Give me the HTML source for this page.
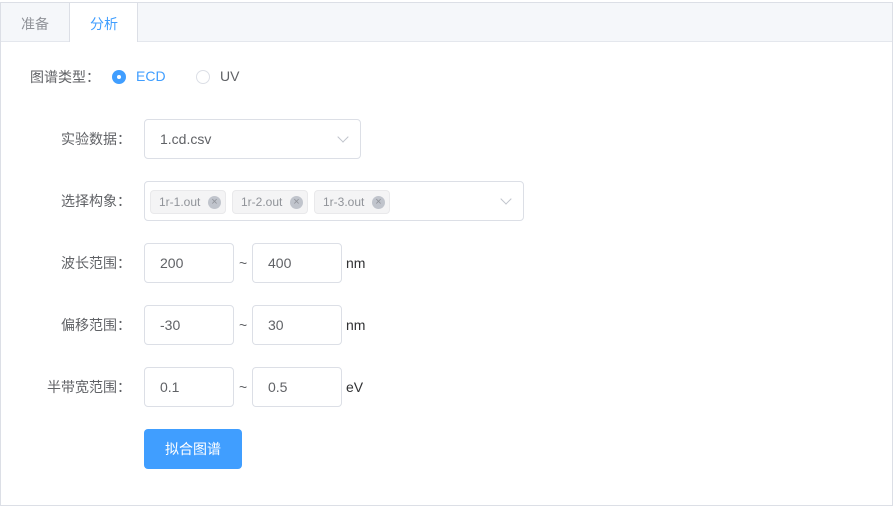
<!DOCTYPE html><html><head><meta charset="utf-8"><style>
body{margin:0;width:895px;height:507px;background:#fff;font-family:"Liberation Sans","Noto Sans CJK SC",sans-serif;font-size:14px;color:#606266;position:relative;overflow:hidden}
.a{position:absolute}
.box{position:absolute;border:1px solid #dcdfe6;border-radius:4px;box-sizing:border-box;background:#fff}
.inp{height:40px;width:90px;line-height:38px;padding-left:15px;color:#606266}
.lab{position:absolute;right:764px;text-align:right;white-space:nowrap;font-family:"Noto Sans CJK SC",sans-serif;line-height:20px}
.tag{position:absolute;top:8px;height:24px;line-height:22px;border:1px solid #e9e9eb;background:#f4f4f5;border-radius:4px;box-sizing:border-box;font-size:12px;color:#909399;padding-left:8px}
.x{position:absolute;right:4px;top:5px;width:13px;height:13px;border-radius:50%;background:#c0c4cc;color:#909399;font-size:11px;line-height:13px;text-align:center}
.chev{position:absolute;width:7px;height:7px;border-right:1px solid #c0c4cc;border-bottom:1px solid #c0c4cc;transform:rotate(45deg)}
</style></head><body>
<div class="a" style="left:0;top:2px;width:893px;height:504px;border:1px solid #dcdfe6;box-sizing:border-box"></div>
<div class="a" style="left:1px;top:3px;width:891px;height:38px;background:#f5f7fa;border-bottom:1px solid #e4e7ed"></div>
<div class="a" style="left:69px;top:3px;width:69px;height:39px;background:#fff;border-left:1px solid #dcdfe6;border-right:1px solid #dcdfe6;box-sizing:border-box"></div>
<div class="a" style="left:21px;top:14px;color:#909399">准备</div>
<div class="a" style="left:90px;top:14px;color:#409eff">分析</div>
<div class="a" style="left:30px;top:67px;font-family:'Noto Sans CJK SC',sans-serif;line-height:20px">图谱类型：</div>
<div class="a" style="left:112px;top:70px;width:14px;height:14px;border-radius:50%;background:#409eff"><div class="a" style="left:5px;top:5px;width:4px;height:4px;border-radius:50%;background:#fff"></div></div>
<div class="a" style="left:136px;top:68px;color:#409eff">ECD</div>
<div class="a" style="left:196px;top:70px;width:14px;height:14px;border-radius:50%;border:1px solid #dcdfe6;box-sizing:border-box"></div>
<div class="a" style="left:220px;top:68px">UV</div>
<div class="lab" style="top:129px">实验数据：</div>
<div class="box inp" style="left:144px;top:119px;width:217px">1.cd.csv</div>
<div class="chev" style="left:339px;top:133px"></div>
<div class="lab" style="top:191px">选择构象：</div>
<div class="box" style="left:144px;top:181px;width:380px;height:40px">
<div class="tag" style="left:5px;width:76px">1r-1.out<span class="x">×</span></div>
<div class="tag" style="left:87px;width:76px">1r-2.out<span class="x">×</span></div>
<div class="tag" style="left:169px;width:76px">1r-3.out<span class="x">×</span></div>
</div>
<div class="chev" style="left:502px;top:195px"></div>
<div class="lab" style="top:253px">波长范围：</div>
<div class="box inp" style="left:144px;top:243px">200</div><div class="a" style="left:239px;top:255px">~</div>
<div class="box inp" style="left:252px;top:243px">400</div><div class="a" style="left:346px;top:255px;color:#303133">nm</div>
<div class="lab" style="top:315px">偏移范围：</div>
<div class="box inp" style="left:144px;top:305px">-30</div><div class="a" style="left:239px;top:317px">~</div>
<div class="box inp" style="left:252px;top:305px">30</div><div class="a" style="left:346px;top:317px;color:#303133">nm</div>
<div class="lab" style="top:377px">半带宽范围：</div>
<div class="box inp" style="left:144px;top:367px">0.1</div><div class="a" style="left:239px;top:379px">~</div>
<div class="box inp" style="left:252px;top:367px">0.5</div><div class="a" style="left:346px;top:379px;color:#303133">eV</div>
<div class="a" style="left:144px;top:429px;width:98px;height:40px;background:#409eff;border-radius:4px;color:#fff;text-align:center;line-height:40px">拟合图谱</div>
</body></html>
